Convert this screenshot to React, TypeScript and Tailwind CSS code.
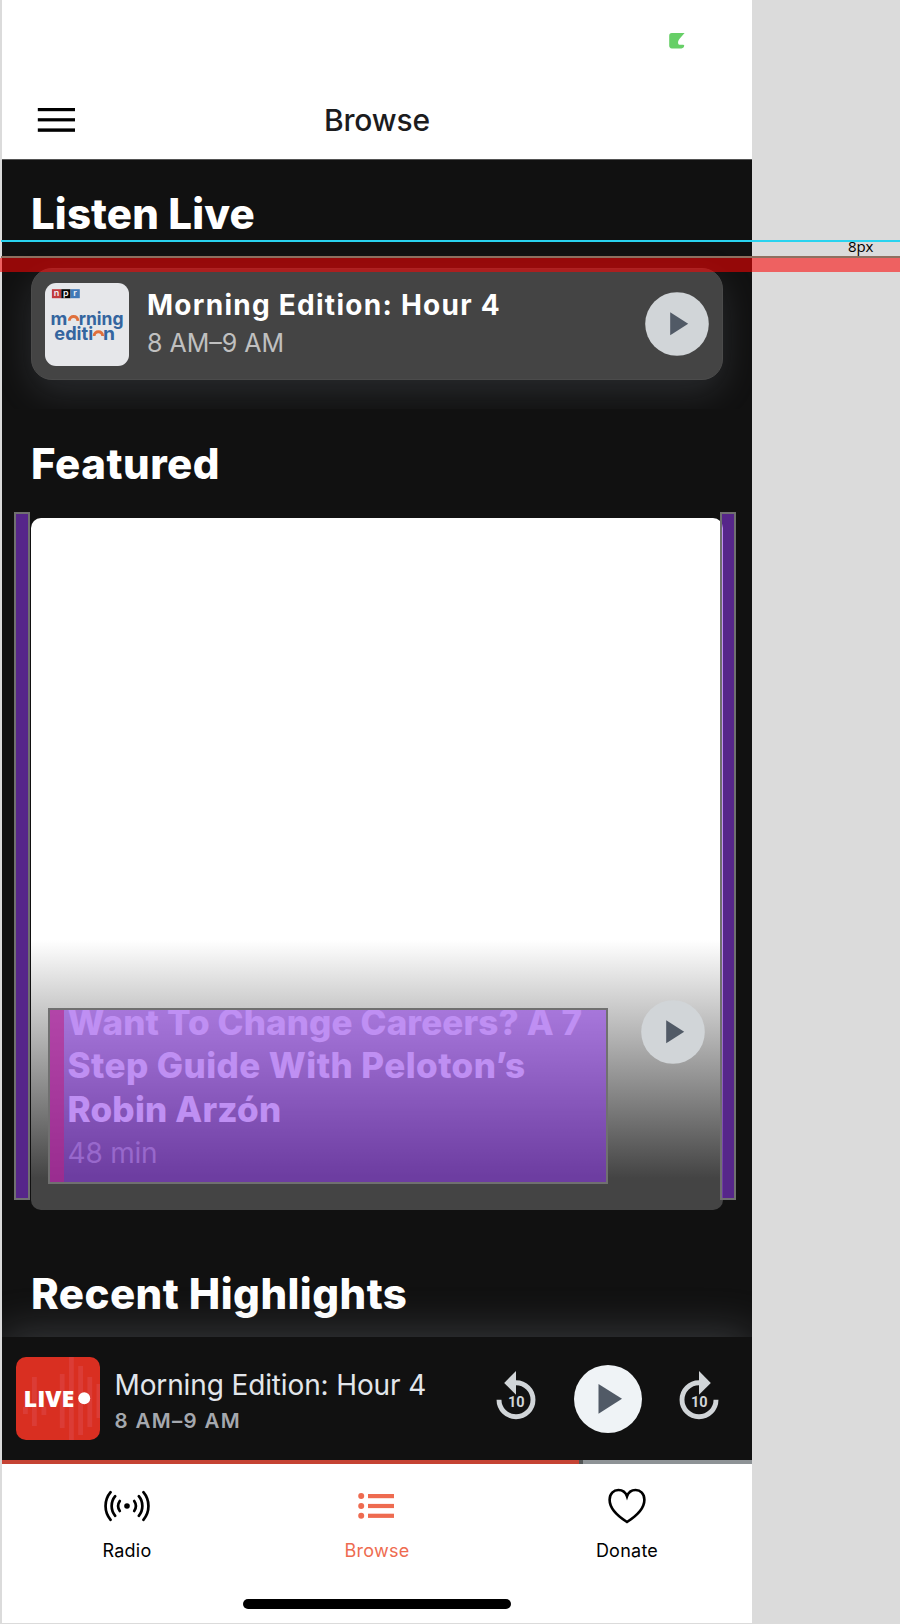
import type { ReactNode } from 'react';

function PlayCircle({ large = false }: { large?: boolean }) {
  return large ? (
    <svg viewBox="0 0 68 68" className="h-[68px] w-[68px] shrink-0">
      <circle cx="34" cy="34" r="34" fill="#eff3f6" />
      <path d="M24.5 19 L48 33.7 L24.5 48.7 Z" fill="#515a66" />
    </svg>
  ) : (
    <svg viewBox="0 0 64 64" className="h-16 w-16 shrink-0">
      <circle cx="32" cy="32" r="31.8" fill="#d1d5d8" />
      <path d="M25.2 20.3 L43.2 31.8 L25.2 43.3 Z" fill="#515a66" />
    </svg>
  );
}

function SkipIcon({ forward = false }: { forward?: boolean }) {
  return (
    <svg viewBox="0 0 40 50" className="mb-[5px] h-[50px] w-10 shrink-0">
      <g transform={forward ? 'translate(40 0) scale(-1 1)' : undefined}>
        <path d="M20 11.8 A17 17 0 1 1 3 28.8" fill="none" stroke="#d1d5d8" strokeWidth="4.9" />
        <path d="M20 0 V23.8 L8.2 11.9 Z" fill="#d1d5d8" />
      </g>
      <text x="20.2" y="36" textAnchor="middle" fill="#d1d5d8" className="font-['Roboto'] text-[14.5px] font-bold">
        10
      </text>
    </svg>
  );
}

function ShowLogo() {
  return (
    <svg viewBox="0 0 84 83" className="h-[83px] w-[84px] shrink-0 rounded-[11px] bg-[#e6e7ea]">
      <rect x="6.9" y="6.2" width="9.4" height="9" fill="#c23a3d" />
      <rect x="16.3" y="6.2" width="9.2" height="9" fill="#050505" />
      <rect x="25.5" y="6.2" width="9.3" height="9" fill="#4079b8" />
      <g fill="#f1f2f4" textAnchor="middle" className="font-['Inter'] text-[9px] font-semibold">
        <text x="11.6" y="13.3">n</text>
        <text x="20.9" y="13.3">p</text>
        <text x="30.1" y="13.3">r</text>
      </g>
      <g fill="#34659f" className="font-['Inter'] text-[18.5px] font-bold">
        <text x="5.5" y="42" textLength="16.8" lengthAdjust="spacingAndGlyphs">m</text>
        <text x="33.7" y="42" textLength="44.8" lengthAdjust="spacingAndGlyphs">rning</text>
        <text x="9.3" y="57.2" textLength="38.8" lengthAdjust="spacingAndGlyphs">editi</text>
        <text x="58.1" y="57.2" textLength="12" lengthAdjust="spacingAndGlyphs">n</text>
      </g>
      <path d="M24.3 37.8 C24.5 32.1 32.5 32.1 32.9 37.8" fill="none" stroke="#e0703c" strokeWidth="2.8" />
      <path d="M49.1 53 C49.3 47.3 57.3 47.3 57.7 53" fill="none" stroke="#e0703c" strokeWidth="2.8" />
    </svg>
  );
}

const waveBars = [
  { x: 7, y: 50, h: 7 },
  { x: 16, y: 20, h: 49 },
  { x: 25.5, y: 50, h: 8 },
  { x: 43.8, y: 17, h: 54 },
  { x: 53, y: 0, h: 84 },
  { x: 62.2, y: 9, h: 69 },
  { x: 71.4, y: 20, h: 50 },
  { x: 80.5, y: 27, h: 34 },
];

function LiveThumb() {
  return (
    <svg viewBox="0 0 84 83" className="h-[83px] w-[84px] shrink-0 rounded-[10px] bg-[#d92f21]">
      {waveBars.map((b) => (
        <rect key={b.x} x={b.x} y={b.y} width="4.8" height={b.h} fill="#db3c36" />
      ))}
      <text x="7.6" y="49.6" textLength="50.6" lengthAdjust="spacingAndGlyphs" fill="#fff" className="font-['Open_Sans'] text-[23.5px] font-extrabold">
        LIVE
      </text>
      <circle cx="68.2" cy="41.2" r="6" fill="#fff" />
    </svg>
  );
}

function Tab({ icon, label, active = false }: { icon: ReactNode; label: string; active?: boolean }) {
  return (
    <div className={active ? 'flex w-[250px] flex-col items-center text-[#ee6b50]' : 'flex w-[250px] flex-col items-center text-black'}>
      <div className="flex h-[84px] items-center">{icon}</div>
      <span className="-mt-[6px] text-[18px] leading-[18px] tracking-[0.25px]">{label}</span>
    </div>
  );
}

export default function App() {
  return (
    <div className="relative h-[1624px] w-[900px] overflow-hidden bg-[#dbdbdb] pl-[2px] font-['Inter',sans-serif]">
      <div className="flex h-[1623px] w-[750px] flex-col overflow-hidden bg-white">
        <header className="h-40 shrink-0 border-b border-[#555] bg-white">
          <div className="flex h-20 items-center justify-end pt-[2px] pr-[67px]">
            <svg viewBox="0 0 16 16" className="h-4 w-4">
              <path d="M2.8 0 H15.6 L10.8 5.6 Q8.2 8.6 9.4 11.2 Q10 12 13.8 11.8 L15.2 12 Q15.2 15.2 12.4 15.4 H2.8 Q0.2 15.4 0.2 12.6 V2.8 Q0.2 0 2.8 0 Z" fill="#67cf67" />
            </svg>
          </div>
          <div className="grid h-[79px] grid-cols-[1fr_auto_1fr] items-center">
            <svg viewBox="0 0 38 26" className="ml-[35px] h-[26px] w-[38px] fill-black">
              <rect x="0.8" y="1" width="37.2" height="3.2" />
              <rect x="0.8" y="11.2" width="37.2" height="3.2" />
              <rect x="0.8" y="21.4" width="37.2" height="3.4" />
            </svg>
            <h1 className="text-[30px] leading-none font-medium tracking-[-0.15px] text-[#1c1c1e]">Browse</h1>
          </div>
        </header>

        <main className="h-[1177px] shrink-0 overflow-hidden bg-[#111] text-white">
          <section className="h-[249px] overflow-hidden pr-[29px] pl-[29px]">
            <h2 className="text-[42px] leading-[108px] font-extrabold tracking-[0.12px]">Listen Live</h2>
            <div className="flex h-28 items-center rounded-[21px] border border-[#4b4b4b] bg-[#444] pt-px pr-[13px] pl-[13px] shadow-[0_12px_36px_rgba(140,150,165,0.2)]">
              <ShowLogo />
              <div className="ml-[18px] flex-1 pb-[1px]">
                <div className="text-[28px] leading-[38px] font-bold tracking-[1.27px]">Morning Edition: Hour 4</div>
                <div className="text-[25px] leading-[38px] font-normal text-[#c0c0c0]">8 AM–9 AM</div>
              </div>
              <div className="-mt-px">
                <PlayCircle />
              </div>
            </div>
          </section>

          <section className="px-[29px] pt-px">
            <h2 className="text-[42px] leading-[108px] font-extrabold tracking-[0.5px]">Featured</h2>
            <div className="flex h-[692px] flex-col justify-end rounded-[10px] bg-[linear-gradient(to_bottom,#fff_0,#fff_422px,#d0d0d0_482px,#444_660px,#444_692px)] pr-[18px] pb-[36px] pl-[36.5px]">
              <div className="flex items-start justify-between">
                <div>
                  <div className="text-[35px] leading-[43.4px] font-extrabold">
                    <div className="tracking-[0.12px]">Want To Change Careers? A 7</div>
                    <div className="tracking-[0.43px]">Step Guide With Peloton’s</div>
                    <div className="tracking-[0.2px]">Robin Arzón</div>
                  </div>
                  <div className="pt-px text-[28px] leading-[42px] font-normal tracking-[-0.2px] text-[#a6a6a6]">48 min</div>
                </div>
                <div className="-mt-px">
                  <PlayCircle />
                </div>
              </div>
            </div>
          </section>

          <h2 className="mt-[30px] pl-[29px] text-[42px] leading-[108px] font-extrabold tracking-[0.45px]">Recent Highlights</h2>
        </main>

        <section className="relative shrink-0 bg-[#111] shadow-[0_-4px_44px_rgba(150,155,165,0.3)]">
          <div className="flex h-[123px] items-center pl-[14px]">
            <LiveThumb />
            <div className="ml-[14.5px] w-[381.5px] pt-[7px]">
              <div className="text-[28px] leading-[37px] font-normal tracking-[-0.13px] text-[#e2e6eb]">Morning Edition: Hour 4</div>
              <div className="text-[20.5px] leading-[34px] font-semibold tracking-[1.35px] text-[#a5a8ae]">8 AM–9 AM</div>
            </div>
            <SkipIcon />
            <div className="ml-[38px]">
              <PlayCircle large />
            </div>
            <div className="ml-[37px]">
              <SkipIcon forward />
            </div>
          </div>
          <div className="flex h-1 bg-[#8e9396]">
            <div className="w-[577px] bg-[#c54334]" />
            <div className="w-1 bg-[#515555]" />
          </div>
        </section>

        <nav className="relative flex h-[159px] shrink-0 flex-col items-center bg-white">
          <div className="flex h-[135px] w-full">
            <Tab
              label="Radio"
              icon={
                <svg viewBox="-24 -17 48 34" className="h-[34px] w-12 fill-none stroke-current stroke-[2.7]" strokeLinecap="round">
                  <circle r="2.8" className="fill-current stroke-none" />
                  <path d="M7.2 -5 A8.8 8.8 0 0 1 7.2 5 M11.8 -9.8 A15.3 15.3 0 0 1 11.8 9.8 M16.4 -13.8 A21.4 21.4 0 0 1 16.4 13.8" />
                  <path d="M-7.2 -5 A8.8 8.8 0 0 0 -7.2 5 M-11.8 -9.8 A15.3 15.3 0 0 0 -11.8 9.8 M-16.4 -13.8 A21.4 21.4 0 0 0 -16.4 13.8" />
                </svg>
              }
            />
            <Tab
              active
              label="Browse"
              icon={
                <svg viewBox="0 0 36 26" className="mr-[2px] h-[26px] w-9 fill-current">
                  <circle cx="3.2" cy="3" r="3" />
                  <circle cx="3.2" cy="13" r="3" />
                  <circle cx="3.2" cy="22.8" r="3" />
                  <rect x="10" y="1" width="26" height="4.2" />
                  <rect x="10" y="10.9" width="26" height="4.2" />
                  <rect x="10" y="20.7" width="26" height="4.2" />
                </svg>
              }
            />
            <Tab
              label="Donate"
              icon={
                <svg viewBox="0 0 38 36" className="mr-px h-9 w-[38px] fill-none stroke-black stroke-[2.6]">
                  <path d="M19 34 C12 29.6 1.6 21.6 1.6 11.8 C1.6 5.6 5.6 2 10.4 2 C14.4 2 17.6 4.2 19 8.4 C20.4 4.2 23.6 2 27.6 2 C32.4 2 36.4 5.6 36.4 11.8 C36.4 21.6 26 29.6 19 34 Z" />
                </svg>
              }
            />
          </div>
          <div className="h-[10px] w-[268px] rounded-full bg-black" />
        </nav>
      </div>

      {/* Spacing guides laid over the screen */}
      <div className="absolute top-[240px] left-[1px] h-[2px] w-[899px] bg-[#29d3ef]" />
      <div className="absolute top-[256px] left-[1px] h-[2px] w-[899px] bg-[#8d7060]" />
      <div className="absolute top-[258px] left-0 h-[14px] w-[900px] bg-[rgba(254,2,2,0.56)]" />
      <span className="absolute top-[236px] left-[848px] font-['Open_Sans'] text-[15px] leading-5 tracking-[-0.1px] text-black">8px</span>
      <div className="absolute top-[512px] left-[14px] h-[688px] w-4 border-2 border-[#707070] bg-[rgba(140,56,233,0.56)]" />
      <div className="absolute top-[512px] left-[720px] h-[688px] w-4 border-2 border-[#707070] bg-[rgba(140,56,233,0.56)]" />
      <div className="absolute top-[1008px] left-[48px] flex h-[176px] w-[560px] border-2 border-[#707070]">
        <div className="w-[14px] bg-[rgba(173,40,161,0.82)]" />
        <div className="flex-1 bg-[rgba(140,56,233,0.56)]" />
      </div>
    </div>
  );
}
